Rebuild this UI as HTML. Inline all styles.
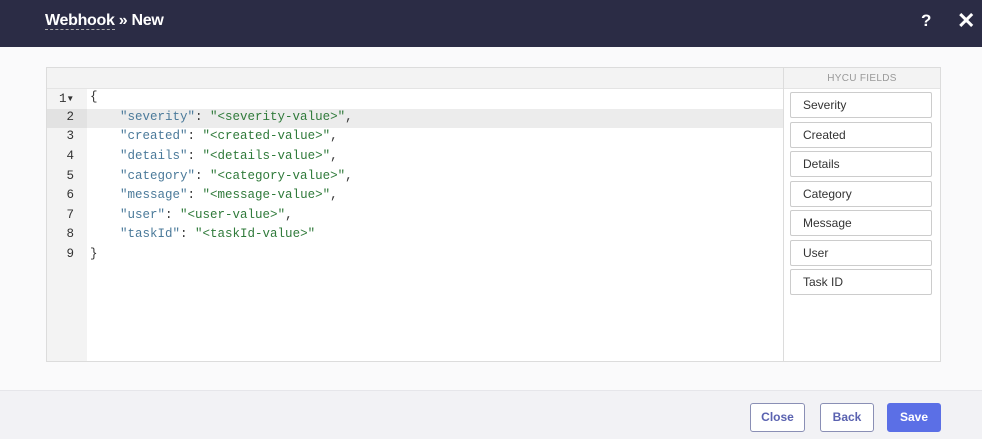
<!DOCTYPE html>
<html><head><style>
*{margin:0;padding:0;box-sizing:border-box}
body{width:982px;height:439px;background:#fafafb;font-family:"Liberation Sans",sans-serif;position:relative;overflow:hidden}
.hdr{position:absolute;left:0;top:0;width:982px;height:47px;background:#2b2c45;color:#fff}
.title{position:absolute;left:45px;top:12px;font-size:16px;font-weight:bold;letter-spacing:-0.3px}
.title u{text-decoration:none;border-bottom:1px dashed #aaa}
.q{position:absolute;left:921px;top:11px;font-size:17px;font-weight:bold}
.x{position:absolute;left:957px;top:8px;font-size:22px;font-weight:bold}
.ed{position:absolute;left:46px;top:67px;width:895px;height:295px;border:1px solid #dcdcdc;background:#fff}
.top{position:absolute;left:0;top:0;width:737px;height:21px;background:#f3f3f3;border-bottom:1px solid #e4e4e4}
.gut{position:absolute;left:0;top:21px;width:40px;height:272px;background:#f3f3f3}
.hl{position:absolute;left:40px;top:41px;width:697px;height:19px;background:#ececec}
.hlg{position:absolute;left:0;top:41px;width:40px;height:19px;background:#e2e2e2}
.ln{position:absolute;left:0;width:27px;text-align:right;font:12.5px "Liberation Mono",monospace;color:#333}
.cd{position:absolute;left:43px;font:12.5px "Liberation Mono",monospace;color:#333;white-space:pre}
.k{color:#4b7a9a}.s{color:#2f7a3a}
.rp{position:absolute;left:736px;top:0;width:157px;height:293px;border-left:1px solid #dcdcdc}
.rh{height:21px;background:#f3f3f3;border-bottom:1px solid #e4e4e4;text-align:center;font-size:10px;color:#999;line-height:21px;letter-spacing:0.3px}
.f{position:absolute;left:6px;width:142px;height:26px;border:1px solid #ccc;border-radius:2px;background:#fff;font-size:12px;color:#333;padding-left:12px;line-height:24px}
.ft{position:absolute;left:0;top:390px;width:982px;height:49px;background:#f2f2f5;border-top:1px solid #e6e6ea}
.b{position:absolute;top:403px;height:29px;border:1px solid #8a8fb5;border-radius:3px;background:#fff;color:#5a62b0;font-size:12px;font-weight:bold;text-align:center;line-height:27px}
</style></head><body>
<div class="hdr"><div class="title"><u>Webhook</u> » New</div><div class="q">?</div><div class="x">✕</div></div>
<div class="ed">
<div class="top"></div><div class="gut"></div><div class="hl"></div><div class="hlg"></div>
<div class="ln" style="top:22px">1▾</div>
<div class="ln" style="top:42px">2</div>
<div class="ln" style="top:61px">3</div>
<div class="ln" style="top:81px">4</div>
<div class="ln" style="top:101px">5</div>
<div class="ln" style="top:120px">6</div>
<div class="ln" style="top:140px">7</div>
<div class="ln" style="top:159px">8</div>
<div class="ln" style="top:179px">9</div>
<div class="cd" style="top:22px">{</div>
<div class="cd" style="top:42px">    <span class="k">"severity"</span>: <span class="s">"&lt;severity-value&gt;"</span>,</div>
<div class="cd" style="top:61px">    <span class="k">"created"</span>: <span class="s">"&lt;created-value&gt;"</span>,</div>
<div class="cd" style="top:81px">    <span class="k">"details"</span>: <span class="s">"&lt;details-value&gt;"</span>,</div>
<div class="cd" style="top:101px">    <span class="k">"category"</span>: <span class="s">"&lt;category-value&gt;"</span>,</div>
<div class="cd" style="top:120px">    <span class="k">"message"</span>: <span class="s">"&lt;message-value&gt;"</span>,</div>
<div class="cd" style="top:140px">    <span class="k">"user"</span>: <span class="s">"&lt;user-value&gt;"</span>,</div>
<div class="cd" style="top:159px">    <span class="k">"taskId"</span>: <span class="s">"&lt;taskId-value&gt;"</span></div>
<div class="cd" style="top:179px">}</div>
<div class="rp"><div class="rh">HYCU FIELDS</div>
<div class="f" style="top:24px">Severity</div>
<div class="f" style="top:54px">Created</div>
<div class="f" style="top:83px">Details</div>
<div class="f" style="top:113px">Category</div>
<div class="f" style="top:142px">Message</div>
<div class="f" style="top:172px">User</div>
<div class="f" style="top:201px">Task ID</div>
</div>
</div>
<div class="ft"></div>
<div class="b" style="left:750px;width:55px">Close</div>
<div class="b" style="left:820px;width:54px">Back</div>
<div class="b" style="left:887px;width:54px;background:#5b6fe6;border-color:#5b6fe6;color:#fff">Save</div>
</body></html>
